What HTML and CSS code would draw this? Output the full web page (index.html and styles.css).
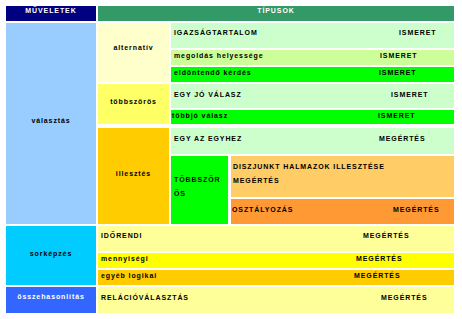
FILE: index.html
```html
<!DOCTYPE html>
<html lang="hu">
<head>
<meta charset="utf-8">
<title>Műveletek és típusok</title>
<link rel="stylesheet" href="styles.css">
</head>
<body>
<div class="chart">
  <div class="row head">
    <div class="cell op hdr-ops">MŰVELETEK</div>
    <div class="cell hdr-types">TÍPUSOK</div>
  </div>

  <div class="row blk-valasztas">
    <div class="cell op valasztas">választás</div>
    <div class="groups">
      <div class="group g-alt">
        <div class="cell sub alt">alternatív</div>
        <div class="items">
          <div class="cell item tall c-lgreen pb6"><span class="lab w-igaz">IGAZSÁGTARTALOM</span><span class="val">ISMERET</span></div>
          <div class="cell item short c-lime"><span class="lab w-megold">megoldás helyessége</span><span class="val">ISMERET</span></div>
          <div class="cell item short c-green"><span class="lab w-eldont">eldöntendő kérdés</span><span class="val">ISMERET</span></div>
        </div>
      </div>
      <div class="group g-tobb">
        <div class="cell sub tobb">többszörös</div>
        <div class="items">
          <div class="cell item h24 c-lgreen pb3"><span class="lab w-egyjo">EGY JÓ VÁLASZ</span><span class="val">ISMERET</span></div>
          <div class="cell item h14 c-green pl1"><span class="lab w-tobbjo">többjó válasz</span><span class="val">ISMERET</span></div>
        </div>
      </div>
      <div class="group g-ill">
        <div class="cell sub ill">illesztés</div>
        <div class="items">
          <div class="cell item h26 c-lgreen pb4"><span class="lab w-egyaz">EGY AZ EGYHEZ</span><span class="val">MEGÉRTÉS</span></div>
          <div class="multi">
            <div class="cell tsz">TÖBBSZÖRÖS</div>
            <div class="multi-col">
              <div class="cell disz"><span class="line">DISZJUNKT HALMAZOK ILLESZTÉSE</span><span class="line">MEGÉRTÉS</span></div>
              <div class="cell item oszt pl1 pb4"><span class="lab w-oszt">OSZTÁLYOZÁS</span><span class="val">MEGÉRTÉS</span></div>
            </div>
          </div>
        </div>
      </div>
    </div>
  </div>

  <div class="row blk-sor">
    <div class="cell op sorkepzes">sorképzés</div>
    <div class="items">
      <div class="cell item tall c-pale"><span class="lab w-ido">IDŐRENDI</span><span class="val">MEGÉRTÉS</span></div>
      <div class="cell item short c-yellow"><span class="lab w-menny">mennyiségi</span><span class="val">MEGÉRTÉS</span></div>
      <div class="cell item short c-gold"><span class="lab w-egyeb">egyéb logikai</span><span class="val">MEGÉRTÉS</span></div>
    </div>
  </div>

  <div class="row blk-ossz">
    <div class="cell op osszehas">összehasonlítás</div>
    <div class="items">
      <div class="cell item full c-pale"><span class="lab w-rel">RELÁCIÓVÁLASZTÁS</span><span class="val">MEGÉRTÉS</span></div>
    </div>
  </div>
</div>
</body>
</html>
```

FILE: styles.css
```css
html, body {
  margin: 0;
  padding: 0;
  background: #ffffff;
}

body {
  font-family: "Liberation Sans", Arial, sans-serif;
  font-size: 7px;
  font-weight: bold;
  letter-spacing: 0.9px;
  line-height: 14px;
  color: #000000;
}

.chart {
  width: 448px;
  margin: 6px 0 0 6px;
  display: flex;
  flex-direction: column;
  gap: 2px;
}

.row {
  display: flex;
  gap: 2px;
}

.cell {
  display: flex;
  align-items: center;
  box-sizing: border-box;
  padding-bottom: 5px;
  white-space: nowrap;
}

/* header */
.head { height: 15px; }
.op {
  flex: 0 0 90px;
  justify-content: center;
}
.hdr-ops { background: #000080; color: #ffffff; }
.hdr-types {
  flex: 1;
  justify-content: center;
  background: #339966;
  color: #ffffff;
}

/* választás block */
.blk-valasztas { height: 201px; }
.valasztas { background: #99ccff; padding-bottom: 6px; }

.groups {
  flex: 1;
  display: flex;
  flex-direction: column;
}
.group {
  display: flex;
  gap: 2px;
}
.g-alt { height: 59px; }
.g-tobb { height: 40px; margin-top: 2px; }
.g-ill { height: 96px; margin-top: 4px; }

.sub {
  flex: 0 0 71px;
  justify-content: center;
}
.alt { background: #ffffcc; padding-bottom: 9px; }
.tobb { background: #ffff66; }
.ill { background: #ffcc00; }

.items {
  flex: 1;
  display: flex;
  flex-direction: column;
  gap: 2px;
}

.item { padding-left: 3px; }
.tall { height: 25px; }
.short { height: 15px; padding-bottom: 3px; }
.h24 { height: 24px; }
.h14 { height: 14px; padding-bottom: 2px; }
.h26 { height: 26px; }
.full { height: 26px; }
.pb3 { padding-bottom: 3px; }
.pb4 { padding-bottom: 4px; }
.pb6 { padding-bottom: 6px; }
.pl1 { padding-left: 1px; }

.lab { flex: 0 0 auto; }
.val { flex: 0 0 auto; }

.w-igaz { width: 225px; }
.w-megold { width: 206px; }
.w-eldont { width: 205px; }
.w-egyjo { width: 217px; }
.w-tobbjo { width: 206px; }
.w-egyaz { width: 205px; }
.w-oszt { width: 161px; }
.w-ido { width: 262px; }
.w-menny { width: 255px; }
.w-egyeb { width: 253px; }
.w-rel { width: 280px; }

/* colours */
.c-lgreen { background: #ccffcc; }
.c-lime { background: #ccff99; }
.c-green { background: #00ff00; }
.c-pale { background: #ffff99; }
.c-yellow { background: #ffff00; }
.c-gold { background: #ffcc00; }

/* többszörös illesztés */
.multi {
  height: 68px;
  display: flex;
  gap: 3px;
}
.tsz {
  flex: 0 0 57px;
  background: #00ff00;
  padding: 0 5px 7px 3px;
  white-space: normal;
  word-break: break-all;
}
.multi-col {
  flex: 1;
  display: flex;
  flex-direction: column;
  gap: 2px;
}
.disz {
  height: 41px;
  background: #ffcc66;
  padding-left: 2px;
  flex-direction: column;
  align-items: flex-start;
  justify-content: center;
}
.line { display: block; }
.oszt {
  height: 25px;
  background: #ff9933;
}

/* sorképzés, összehasonlítás */
.blk-sor { height: 59px; }
.sorkepzes { background: #00ccff; padding-bottom: 4px; }
.blk-ossz { height: 26px; }
.osszehas { background: #3366ff; color: #ffffff; padding-bottom: 6px; }
```
